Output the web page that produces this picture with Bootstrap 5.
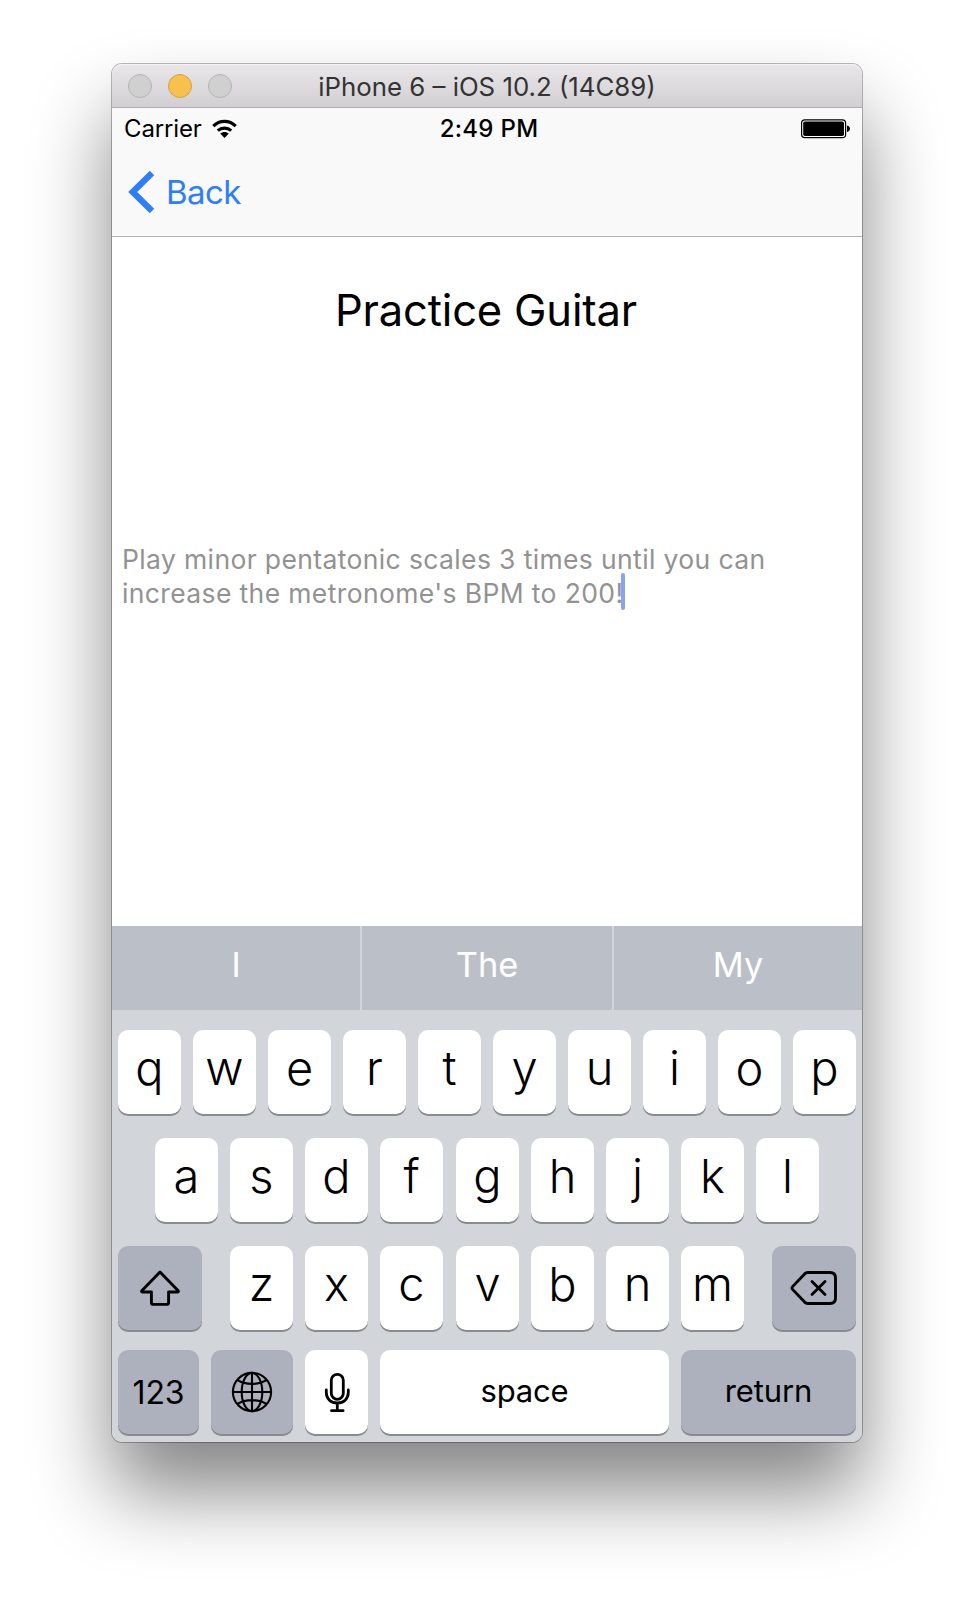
<!DOCTYPE html>
<html lang="en">
<head>
<meta charset="utf-8">
<meta name="viewport" content="width=device-width, initial-scale=1">
<title>iPhone 6 – iOS 10.2 (14C89)</title>
<link href="https://cdn.jsdelivr.net/npm/bootstrap@5.3.0/dist/css/bootstrap.min.css" rel="stylesheet">
<script src="https://cdn.jsdelivr.net/npm/bootstrap@5.3.0/dist/js/bootstrap.bundle.min.js"></script>
<style>
body{background:#fff;font-family:Inter,"Liberation Sans",sans-serif;color:#000;padding:64px 0 160px 112px}
.sim{width:750px;height:1378px;border-radius:10px;background:#fff;box-shadow:0 0 0 1px rgba(0,0,0,.27),0 50px 80px rgba(0,0,0,.48)}
.titlebar{height:44px;background:linear-gradient(#e9e7ea,#d1cfd2);border-bottom:1px solid #b0acb0;border-radius:10px 10px 0 0;box-shadow:inset 0 1px #f4f3f5;padding:0 16px}
.dot{width:24px;height:24px;border-radius:50%;background:#d0d0d0;border:1px solid #b3b3b3}
.dot.amber{background:#f7c04f;border-color:#dba03a}
.side{width:104px}
.wtitle{font-size:25.8px;line-height:42px;padding-top:2px;color:#333}
.topbars{background:#f9f9f9;border-bottom:1px solid #b2b2b2;height:129px}
.status{height:40px;font-size:24px;line-height:38px;padding:1px 11px 0 12px}
.carrier{letter-spacing:-.15px;padding-top:1px}
.clock{font-weight:500;letter-spacing:.3px;padding:1px 0 0 3px}
.third{width:200px}
.navrow{height:88px;padding-left:16px}
.back{font-size:33px;letter-spacing:-.6px;color:#2f7ef7;text-decoration:none;line-height:88px;margin-left:10px}
.heading{font-size:43.5px;line-height:60px;letter-spacing:-.17px;font-weight:400;margin:43px 2px 0 0}
.notes{font-size:26.5px;line-height:34px;letter-spacing:.37px;color:#929292;margin:202px 0 0;padding-left:10px;height:384px}
.caret{top:-3px;right:-2px;width:4px;height:37px;border-radius:2px;background:#8aa2ef}
.keyboard{background:#d2d5da;border-radius:0 0 10px 10px;height:516px}
.suggest{height:84px;background:#bbc0c8;color:#fff;font-size:34.3px}
.suggest div{display:flex;align-items:center;justify-content:center;padding-bottom:7px;flex:0 0 248px}
.suggest .mid{flex-basis:254px;border:solid #d2d5da;border-width:0 2px}
.krow{gap:12px;padding:0 6px}
.key{flex:none;width:63px;height:84px;border-radius:10px;background:#fff;box-shadow:0 2px #898b8f;display:flex;align-items:center;justify-content:center;font-size:47px;font-weight:350;padding-bottom:10px;line-height:1}
.key.fn{background:#adb1bd}
.key.word{font-size:31px;font-weight:400;padding-bottom:3px;letter-spacing:-.15px}
.key.digits{font-size:32px;padding:2px 0 0}
.key.pic{padding:0}
.nudge{margin-left:1px}
</style>
</head>
<body>
<main class="sim">
  <header class="titlebar d-flex align-items-center justify-content-between">
    <div class="side d-flex gap-3"><span class="dot"></span><span class="dot amber"></span><span class="dot"></span></div>
    <div class="wtitle">iPhone 6 – iOS 10.2 (14C89)</div>
    <div class="side"></div>
  </header>
  <div class="topbars">
    <div class="status d-flex justify-content-between align-items-center">
      <div class="third d-flex align-items-center"><span class="carrier">Carrier</span>
        <svg class="ms-2" width="30" height="20" viewBox="0 0 30 20"><g fill="none" stroke="#000" stroke-width="3.1"><path d="M3.3 7.2C9.600.8 19.400.8 25.700 7.200"/><path d="M7.800 11.700C11.500 8.200 17.500 8.200 21.200 11.700"/></g><path d="M14.500 19l-4.300-4.400c2.400-2.100 6.200-2.100 8.600 0z"/></svg>
      </div>
      <div class="clock">2:49 PM</div>
      <div class="third d-flex justify-content-end">
        <svg width="50" height="20" viewBox="0 0 50 20"><rect x=".6" y=".9" width="44" height="17.800" rx="3.200" fill="#fff" stroke="#000" stroke-width="1.200"/><rect x="2.200" y="2.500" width="40.800" height="14.600" rx="1.800"/><path d="M46 6.500c4 .8 4 5.800 0 6.600z"/></svg>
      </div>
    </div>
    <nav class="navrow d-flex align-items-center">
      <svg width="28" height="44" viewBox="0 0 28 44"><path d="M24 3L4.700 22 24 41" fill="none" stroke="#2f7ef7" stroke-width="6.300"/></svg>
      <a class="back" href="#">Back</a>
    </nav>
  </div>
  <h1 class="heading text-center">Practice Guitar</h1>
  <p class="notes">Play minor pentatonic scales 3 times until you can<br><span class="position-relative d-inline-block">increase the metronome's BPM to 200!<span class="caret position-absolute"></span></span></p>
  <section class="keyboard">
    <div class="suggest d-flex"><div>I</div><div class="mid">The</div><div>My</div></div>
    <div class="krow d-flex" style="margin-top:20px"><span class="key">q</span><span class="key">w</span><span class="key">e</span><span class="key">r</span><span class="key">t</span><span class="key">y</span><span class="key">u</span><span class="key">i</span><span class="key">o</span><span class="key">p</span></div>
    <div class="krow d-flex justify-content-center" style="margin-top:24px"><span class="key">a</span><span class="key">s</span><span class="key">d</span><span class="key">f</span><span class="key nudge">g</span><span class="key">h</span><span class="key">j</span><span class="key">k</span><span class="key">l</span></div>
    <div class="krow d-flex" style="margin-top:24px">
      <span class="key fn pic me-3" style="width:84px"><svg width="42" height="38" viewBox="0 0 42 38"><path d="M21 3L2.800 21.800q-.6 1 .6 1.200H12.400v10.400q0 2 2 2H27.600q2 0 2-2V23h9q1.200-.2.600-1.200z" fill="none" stroke="#000" stroke-width="2.900" stroke-linejoin="round"/></svg></span>
      <span class="key">z</span><span class="key">x</span><span class="key">c</span><span class="key nudge">v</span><span class="key">b</span><span class="key">n</span><span class="key">m</span>
      <span class="key fn pic ms-3" style="width:84px"><svg width="48" height="36" viewBox="0 0 48 36"><path d="M17.800 2.500H40q5.500 0 5.500 5.500V28q0 5.500-5.500 5.500H17.800q-1.800 0-3.200-1.400L2.600 19.400q-1.200-1.400 0-2.800L14.600 3.900q1.400-1.400 3.200-1.400z" fill="none" stroke="#000" stroke-width="2.900"/><path d="M22 11.500l13 13M35 11.500l-13 13" stroke="#000" stroke-width="2.800" stroke-linecap="round"/></svg></span>
    </div>
    <div class="krow d-flex" style="margin-top:20px">
      <span class="key fn word digits" style="width:81px">123</span>
      <span class="key fn pic" style="width:82px"><svg width="42" height="42" viewBox="0 0 42 42"><g fill="none" stroke="#000" stroke-width="2.100"><circle cx="21" cy="21" r="19.100"/><ellipse cx="21" cy="21" rx="10.300" ry="19.100"/><path d="M21 2v38M2 21h38M6.500 9C14.500 14.200 27.500 14.200 35.500 9M6.500 33C14.500 27.800 27.500 27.800 35.500 33"/></g></svg></span>
      <span class="key pic"><svg width="28" height="42" viewBox="0 0 28 42"><g fill="none" stroke="#000" stroke-width="2.800" stroke-linecap="round"><rect x="8.300" y="3.300" width="12" height="25" rx="6"/><path d="M3.300 19v2.500C3.300 28 8 32 14.300 32S25.300 28 25.300 21.500V19M14.300 32v7.500M8.500 39.700h11.600"/></g></svg></span>
      <span class="key word" style="width:289px">space</span>
      <span class="key fn word" style="width:175px">return</span>
    </div>
  </section>
</main>
</body>
</html>
